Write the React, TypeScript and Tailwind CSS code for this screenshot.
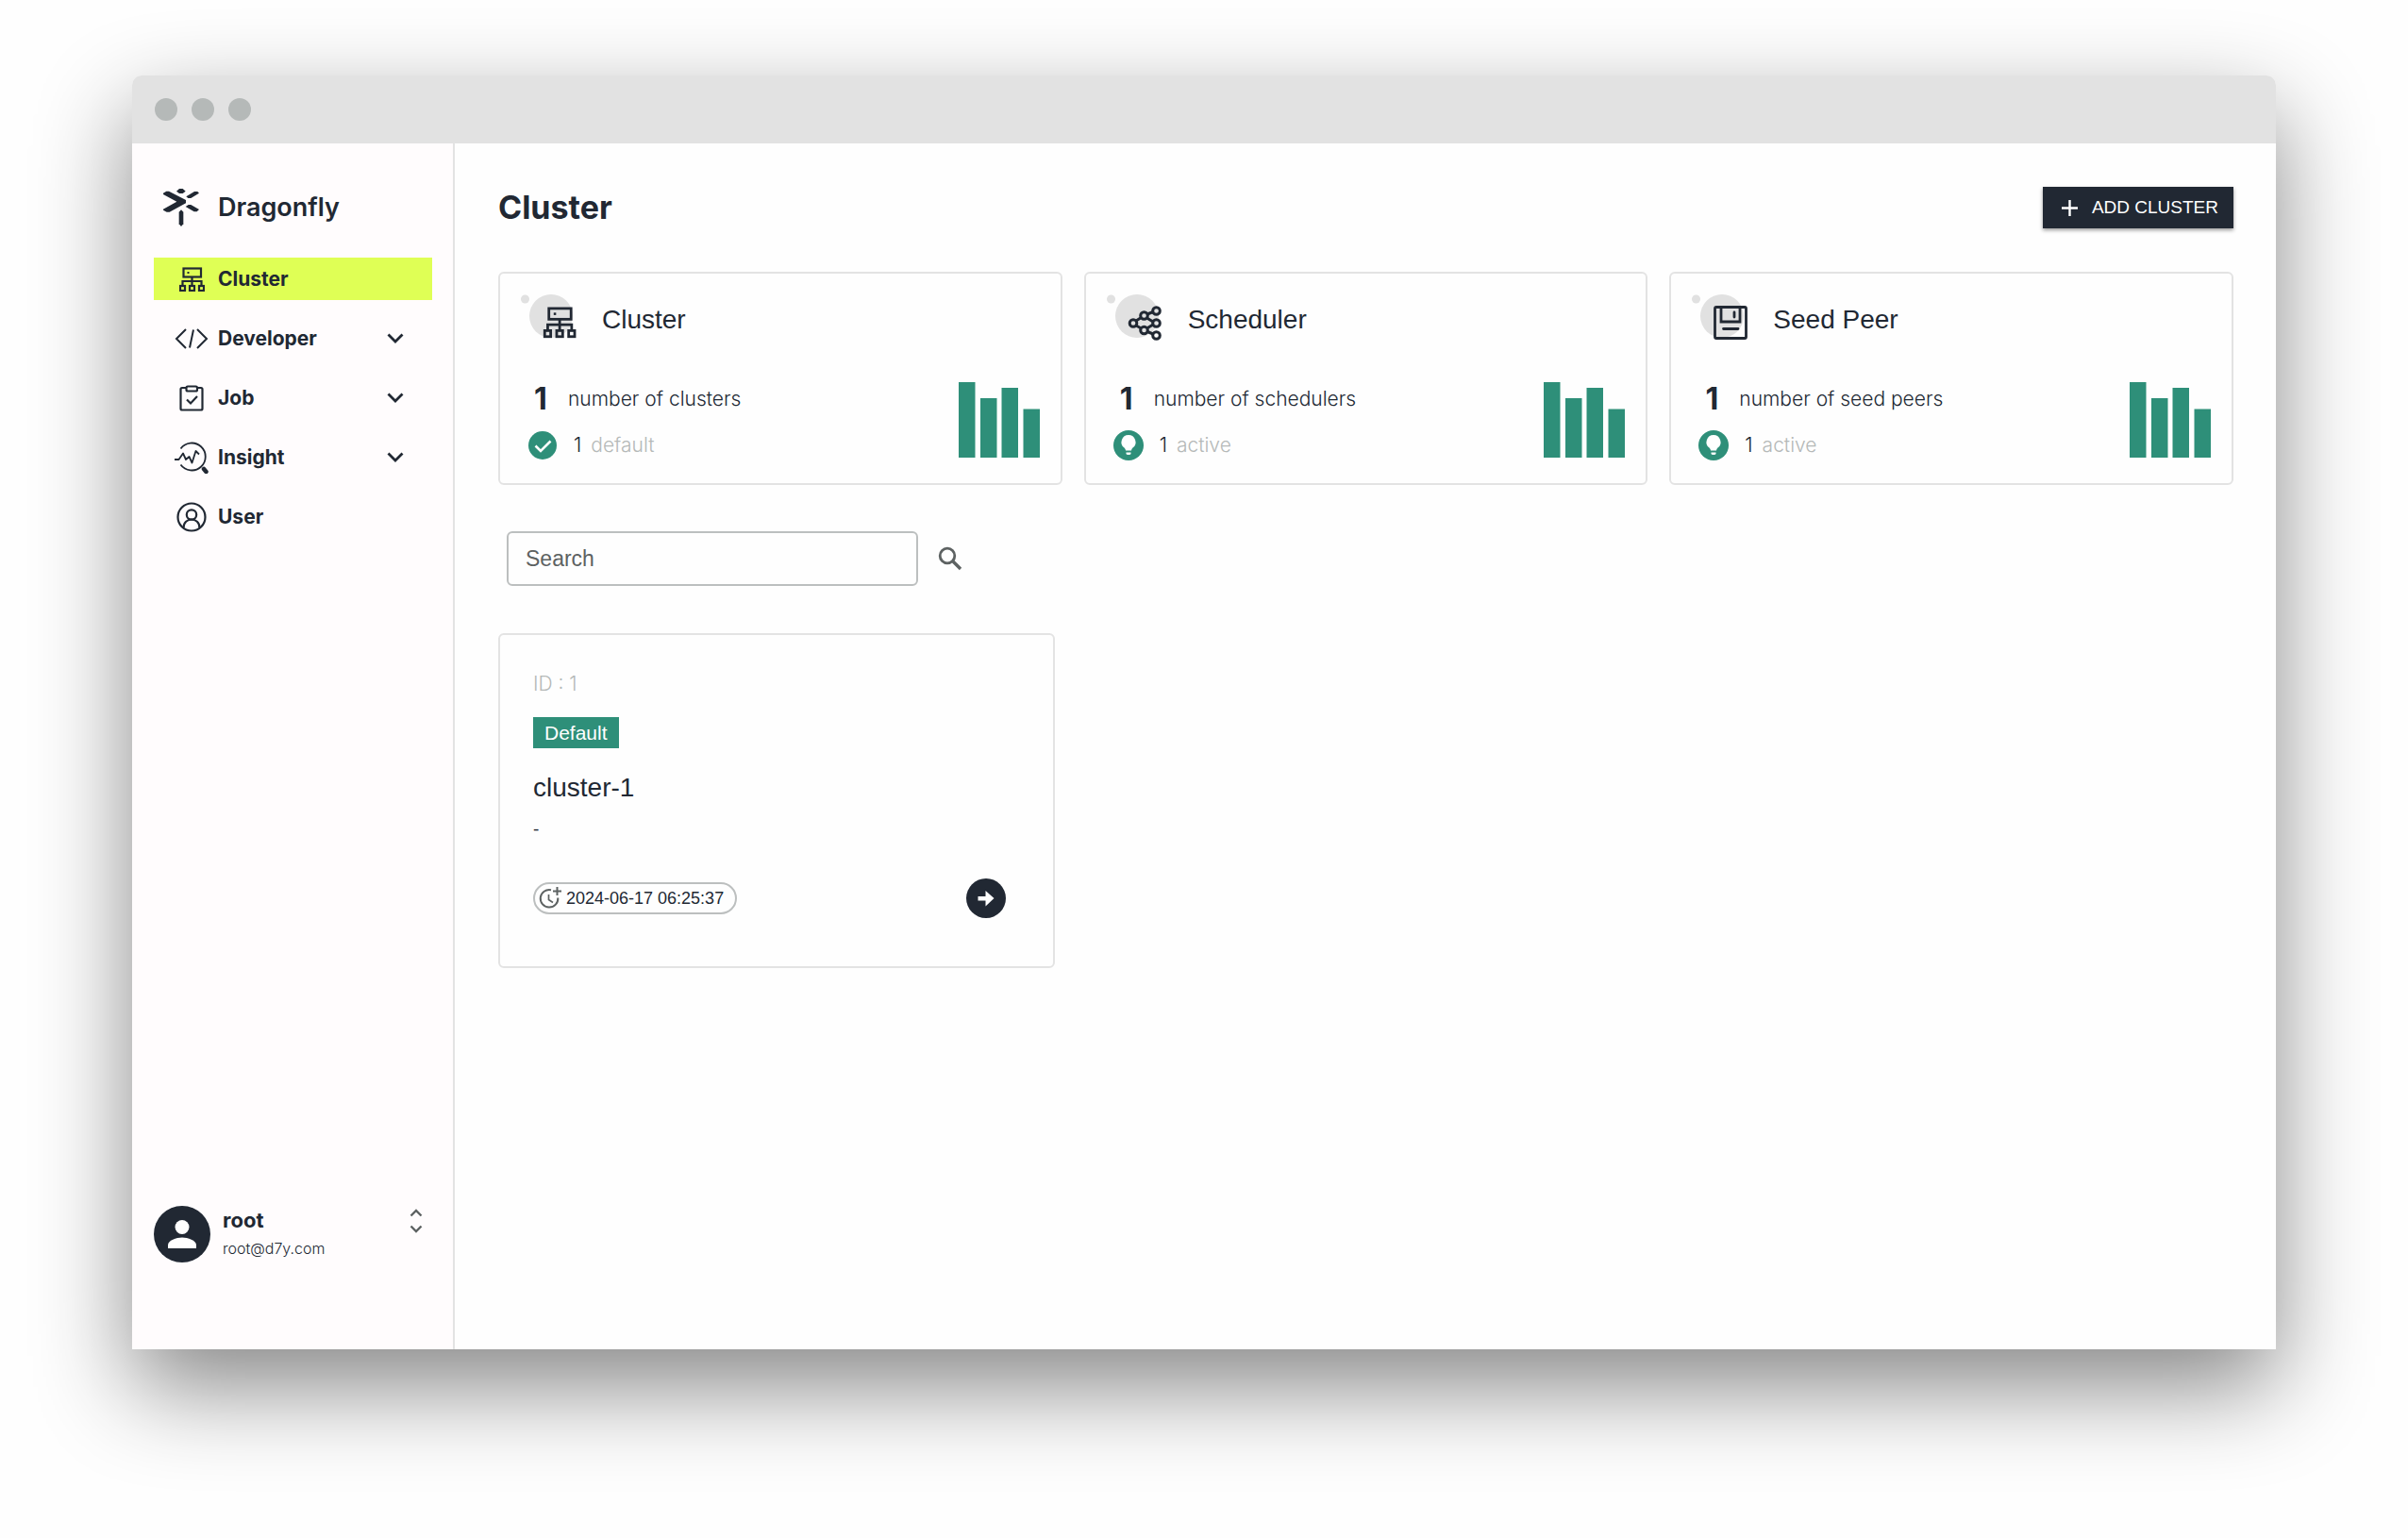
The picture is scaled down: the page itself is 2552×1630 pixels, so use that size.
import type { ReactNode } from "react";

// ── Icons ────────────────────────────────────────────────────────────────────

function LogoIcon() {
  return (
    <svg width="38" height="40" viewBox="0 0 114 120" fill="currentColor">
      <path d="M0 14 10 8H18L72 36V46L20 74H11L0 68V65L43 41 0 18Z" />
      <path d="M51 0H62L71 8 62 15H51L42 8Z" />
      <path d="M73 25 99 9H109L114 14 88 30H79Z" />
      <path d="M71 57 80 51H88L114 66 107 73H98Z" />
      <path d="M50 74 57 67 64 74V112L57 120 50 112Z" />
    </svg>
  );
}

function ClusterGlyph() {
  return (
    <g fill="none" stroke="currentColor" strokeWidth="2.2">
      <rect x="4.5" y="1.5" width="18.5" height="9" />
      <path d="M13.5 10.5V20M3.5 20V15H23.5V20" />
      <rect x="1" y="20" width="5" height="5" />
      <rect x="11" y="20" width="5" height="5" />
      <rect x="21" y="20" width="5" height="5" />
      <rect x="8.5" y="5" width="2" height="2" fill="currentColor" stroke="none" />
    </g>
  );
}

function ClusterIcon() {
  return (
    <svg width="27" height="26" viewBox="0 0 27 26">
      <ClusterGlyph />
    </svg>
  );
}

function DeveloperIcon() {
  return (
    <svg width="36" height="24" viewBox="0 0 36 24" fill="none" stroke="currentColor" strokeWidth="2">
      <path d="M12 2 2 12 12 22M24 2 34 12 24 22M20 2.5 16 21.5" />
    </svg>
  );
}

function JobIcon() {
  return (
    <svg width="26" height="28" viewBox="0 0 26 28" fill="none" stroke="currentColor" strokeWidth="2.2">
      <path d="M7 3H3Q1.5 3 1.5 4.5V25Q1.5 26.5 3 26.5H23Q24.5 26.5 24.5 25V4.5Q24.5 3 23 3H19" />
      <rect x="7.5" y="1.5" width="11.5" height="5" rx="1.5" />
      <path d="M8 15.5 12 19.5 19 12" />
    </svg>
  );
}

function InsightIcon() {
  return (
    <svg width="36" height="34" viewBox="0 0 36 34" fill="none" stroke="currentColor" strokeWidth="1.8" strokeLinejoin="round">
      <path d="M6.5 7.5A14.5 14.5 0 1 1 6.5 24.5" />
      <path d="M0 19H4.5L9 12.5 12 19 15.5 16 18.5 22.5 22.5 10 26 13.5" />
      <path d="M31 29 33.5 32" strokeWidth="4.5" strokeLinecap="round" />
    </svg>
  );
}

function UserIcon() {
  return (
    <svg width="32" height="32" viewBox="0 0 32 32" fill="none" stroke="currentColor" strokeWidth="2.2">
      <circle cx="16" cy="16" r="14.5" />
      <circle cx="16" cy="13.5" r="5.2" />
      <path d="M7.5 27.5C7.5 15.5 24.5 15.5 24.5 27.5" />
    </svg>
  );
}

function ChevronIcon() {
  return (
    <svg width="18" height="11" viewBox="0 0 18 11" fill="none" stroke="currentColor" strokeWidth="2.8">
      <path d="M1.5 1.5 9 9 16.5 1.5" />
    </svg>
  );
}

function UnfoldIcon() {
  return (
    <svg width="14" height="26" viewBox="0 0 14 26" fill="none" stroke="currentColor" strokeWidth="2.4">
      <path d="M1.5 7.5 7 2 12.5 7.5M1.5 18.5 7 24 12.5 18.5" />
    </svg>
  );
}

function AvatarIcon() {
  return (
    <svg width="60" height="60" viewBox="0 0 60 60">
      <circle cx="30" cy="30" r="30" fill="#212833" />
      <circle cx="30" cy="22.5" r="7.5" fill="#fff" />
      <path d="M15 45V41.5C15 36.5 24 33.5 30 33.5S45 36.5 45 41.5V45Z" fill="#fff" />
    </svg>
  );
}

// Grey bubbles behind the icon of a summary card
function StatIcon({ children }: { children: ReactNode }) {
  return (
    <svg width="60" height="54" viewBox="0 0 60 54" className="shrink-0">
      <circle cx="4.5" cy="5" r="4.5" fill="#e1e1e1" />
      <circle cx="32" cy="23" r="23" fill="#e1e1e1" />
      {children}
    </svg>
  );
}

function StatCluster() {
  return (
    <StatIcon>
      <g transform="translate(24 13) scale(1.27)">
        <ClusterGlyph />
      </g>
    </StatIcon>
  );
}

function StatScheduler() {
  return (
    <StatIcon>
      <g fill="none" stroke="currentColor" strokeWidth="3">
        <circle cx="28" cy="30.5" r="3.8" />
        <circle cx="39.5" cy="22.5" r="3.8" />
        <circle cx="39.5" cy="38" r="3.8" />
        <circle cx="52.5" cy="17.5" r="3.8" />
        <circle cx="52.5" cy="30.5" r="3.8" />
        <circle cx="52.5" cy="43.5" r="3.8" />
        <path d="M31 28 36.5 24.5M31 33 36.5 36M43 21 49 18.5M42.5 25 49 29M42.5 36 49 32M43 39.5 49 42" />
      </g>
    </StatIcon>
  );
}

function StatSeedPeer() {
  return (
    <StatIcon>
      <g fill="none" stroke="currentColor" strokeWidth="2.8">
        <rect x="24.5" y="13.5" width="33" height="33" rx="1.5" />
        <path d="M31 14V29H51V14" />
        <path d="M45 19V24M33.5 36.5H49" strokeLinecap="round" />
      </g>
    </StatIcon>
  );
}

function CheckCircle() {
  return (
    <svg width="30" height="30" viewBox="0 0 30 30" className="shrink-0">
      <circle cx="15" cy="15" r="15" fill="#2e8f79" />
      <path d="M7.5 15.5 13 21 23.5 10.5" fill="none" stroke="#fff" strokeWidth="2.6" />
    </svg>
  );
}

function BulbCircle() {
  return (
    <svg width="30" height="30" viewBox="1 1 30 30" className="shrink-0 overflow-visible">
      <circle cx="16" cy="16" r="16" fill="#2e8f79" />
      <path d="M16 5A7.5 7.5 0 0 0 11.5 18.5Q13 20 13 21.5H19Q19 20 20.5 18.5A7.5 7.5 0 0 0 16 5Z" fill="#fff" />
      <path d="M13.5 23.5H18.5V25Q18.5 26 16 26T13.5 25Z" fill="#fff" />
    </svg>
  );
}

function BarsIcon() {
  return (
    <svg width="86" height="80" viewBox="0 0 86 80" fill="#2e8f79" className="shrink-0">
      <rect x="0" y="0" width="17.5" height="80" />
      <rect x="23" y="17" width="17.5" height="63" />
      <rect x="45.5" y="6" width="17.5" height="74" />
      <rect x="68.5" y="28.5" width="17.5" height="51.5" />
    </svg>
  );
}

function SearchIcon() {
  return (
    <svg width="26" height="26" viewBox="0 0 26 26" fill="none" stroke="currentColor" strokeWidth="2.8">
      <circle cx="10" cy="10" r="7.8" />
      <path d="M15.5 15.5 24 24" strokeWidth="3.4" />
    </svg>
  );
}

function MoreTimeIcon() {
  return (
    <svg width="24" height="24" viewBox="0 0 24 24" fill="none" stroke="#5d6262" strokeWidth="2">
      <path d="M13 3.2A9.3 9.3 0 1 0 20.3 11.5" />
      <path d="M10.5 8V13.5L15 16.5" strokeWidth="1.7" />
      <path d="M19.5 0V9M15 4.5H24" />
    </svg>
  );
}

function ArrowCircle() {
  return (
    <svg width="42" height="42" viewBox="0 0 42 42">
      <circle cx="21" cy="21" r="21" fill="#212833" />
      <path d="M12.5 19H20.5V13L29.5 21 20.5 29.5V23.5H12.5Z" fill="#fff" />
    </svg>
  );
}

// ── Data ─────────────────────────────────────────────────────────────────────

interface NavItem {
  label: string;
  icon: ReactNode;
  active?: boolean;
  expandable?: boolean;
}

const navItems: NavItem[] = [
  { label: "Cluster", icon: <ClusterIcon />, active: true },
  { label: "Developer", icon: <DeveloperIcon />, expandable: true },
  { label: "Job", icon: <JobIcon />, expandable: true },
  { label: "Insight", icon: <InsightIcon />, expandable: true },
  { label: "User", icon: <UserIcon /> },
];

interface Stat {
  title: string;
  icon: ReactNode;
  total: number;
  totalLabel: string;
  statusIcon: ReactNode;
  status: number;
  statusLabel: string;
}

const stats: Stat[] = [
  {
    title: "Cluster",
    icon: <StatCluster />,
    total: 1,
    totalLabel: "number of clusters",
    statusIcon: <CheckCircle />,
    status: 1,
    statusLabel: "default",
  },
  {
    title: "Scheduler",
    icon: <StatScheduler />,
    total: 1,
    totalLabel: "number of schedulers",
    statusIcon: <BulbCircle />,
    status: 1,
    statusLabel: "active",
  },
  {
    title: "Seed Peer",
    icon: <StatSeedPeer />,
    total: 1,
    totalLabel: "number of seed peers",
    statusIcon: <BulbCircle />,
    status: 1,
    statusLabel: "active",
  },
];

// ── Sections ─────────────────────────────────────────────────────────────────

function Sidebar() {
  return (
    <aside className="flex w-[342px] shrink-0 flex-col border-r-2 border-[#e3e3e3] bg-[#fffcfd] pt-[46px] pr-[22px] pb-[92px] pl-[23px]">
      <a href="#" className="flex h-11 items-center gap-5 pl-[10px]">
        <LogoIcon />
        <span className="text-[27px] leading-8 font-semibold">Dragonfly</span>
      </a>

      <nav className="mt-[31px] flex flex-col gap-[18px]">
        {navItems.map((item) => (
          <a
            key={item.label}
            href="#"
            className={`flex h-[45px] items-center gap-[10px] pr-[30px] pl-[22px] ${item.active ? "bg-[#dfff55]" : ""}`}
          >
            <span className="flex w-9 justify-center">{item.icon}</span>
            <span className="text-[21px] leading-7 font-bold">{item.label}</span>
            {item.expandable && (
              <span className="ml-auto">
                <ChevronIcon />
              </span>
            )}
          </a>
        ))}
      </nav>

      <div className="mt-auto flex gap-[13px]">
        <AvatarIcon />
        <div>
          <p className="text-[22px] leading-[30px] font-bold">root</p>
          <p className="text-[16px] leading-[30px] font-light">root@d7y.com</p>
        </div>
        <button type="button" aria-label="Account menu" className="mt-[3px] mr-[10px] ml-auto self-start text-[#5d6262]">
          <UnfoldIcon />
        </button>
      </div>
    </aside>
  );
}

function StatCard({ stat }: { stat: Stat }) {
  return (
    <div className="rounded-md border-2 border-[#e3e3e3] px-[22px] pt-[22px] pb-6">
      <div className="flex items-center gap-[26px]">
        {stat.icon}
        <h2 className="font-['Liberation_Sans',Arial,sans-serif] text-[28px] leading-9">{stat.title}</h2>
      </div>
      <div className="mt-9 flex items-center justify-between">
        <div className="flex flex-col gap-3 pl-2">
          <div className="flex h-[42px] items-center gap-4">
            <span className="w-[26px] text-center text-[32px] leading-10 font-bold">{stat.total}</span>
            <span className="text-[21px] leading-7 font-light">{stat.totalLabel}</span>
          </div>
          <div className="flex h-8 items-center gap-[18px]">
            {stat.statusIcon}
            <p className="flex gap-[10px] text-[21px] leading-7 font-light">
              {stat.status} <span className="text-[#b5b9b8]">{stat.statusLabel}</span>
            </p>
          </div>
        </div>
        <BarsIcon />
      </div>
    </div>
  );
}

function ClusterCard() {
  return (
    <div className="rounded-md border-2 border-[#e3e3e3] pt-[38px] pr-[50px] pb-[51px] pl-[35px]">
      <p className="text-[21px] leading-7 font-light text-[#b5b9b8]">ID : 1</p>
      <span className="mt-[21px] flex h-[33px] w-fit items-center bg-[#2e8f79] px-3 font-['Liberation_Sans',Arial,sans-serif] text-[21px] text-white">
        Default
      </span>
      <h3 className="mt-[26px] font-['Liberation_Sans',Arial,sans-serif] text-[28px] leading-8">cluster-1</h3>
      <p className="mt-4 font-['Liberation_Sans',Arial,sans-serif] text-[19px] leading-6">-</p>
      <div className="mt-10 flex items-center justify-between">
        <span className="flex h-[34px] items-center gap-[5px] rounded-full border-2 border-[#bcbfbf] pr-3 pl-1 font-['Liberation_Sans',Arial,sans-serif] text-[18px]">
          <MoreTimeIcon />
          2024-06-17 06:25:37
        </span>
        <button type="button" aria-label="Open cluster-1">
          <ArrowCircle />
        </button>
      </div>
    </div>
  );
}

export default function App() {
  return (
    <div className="flex min-h-screen flex-col bg-[#fefefe] px-[140px] pt-20 pb-[200px] font-[Inter,sans-serif] text-[#212833]">
      <div className="flex grow flex-col rounded-t-[10px] bg-[#fefefe] shadow-[0_40px_100px_rgba(0,0,0,0.47)]">
        {/* Title bar */}
        <div className="flex h-[72px] shrink-0 items-center gap-[15px] rounded-t-[10px] bg-[#e2e2e2] px-6">
          <span className="size-6 rounded-full bg-[#b5b9b8]" />
          <span className="size-6 rounded-full bg-[#b5b9b8]" />
          <span className="size-6 rounded-full bg-[#b5b9b8]" />
        </div>

        <div className="flex grow">
          <Sidebar />

          <main className="grow pt-[46px] pr-[45px] pl-[46px]">
            <div className="flex h-11 items-center justify-between">
              <h1 className="text-[34px] leading-10 font-bold">Cluster</h1>
              <button
                type="button"
                className="flex h-11 items-center gap-[15px] bg-[#212833] px-4 pl-5 font-['Liberation_Sans',Arial,sans-serif] text-[19px] text-white shadow-[0_2px_4px_rgba(0,0,0,0.4)]"
              >
                <svg width="17" height="17" viewBox="0 0 17 17" stroke="currentColor" strokeWidth="2.4">
                  <path d="M8.5 0V17M0 8.5H17" />
                </svg>
                ADD CLUSTER
              </button>
            </div>

            <div className="mt-[46px] grid grid-cols-3 gap-[23px]">
              {stats.map((stat) => (
                <StatCard key={stat.title} stat={stat} />
              ))}
            </div>

            <form className="mt-[49px] flex items-center gap-[21px] pl-[9px]">
              <input
                type="text"
                aria-label="Search"
                placeholder="Search"
                className="h-[58px] w-[436px] rounded-md border-2 border-[#bcbfbf] px-[18px] font-['Liberation_Sans',Arial,sans-serif] text-[23px] placeholder:text-[#5d6262]"
              />
              <button type="button" aria-label="Run search" className="text-[#5d6262]">
                <SearchIcon />
              </button>
            </form>

            <div className="mt-[50px] grid grid-cols-3 gap-[34px]">
              <ClusterCard />
            </div>
          </main>
        </div>
      </div>
    </div>
  );
}
